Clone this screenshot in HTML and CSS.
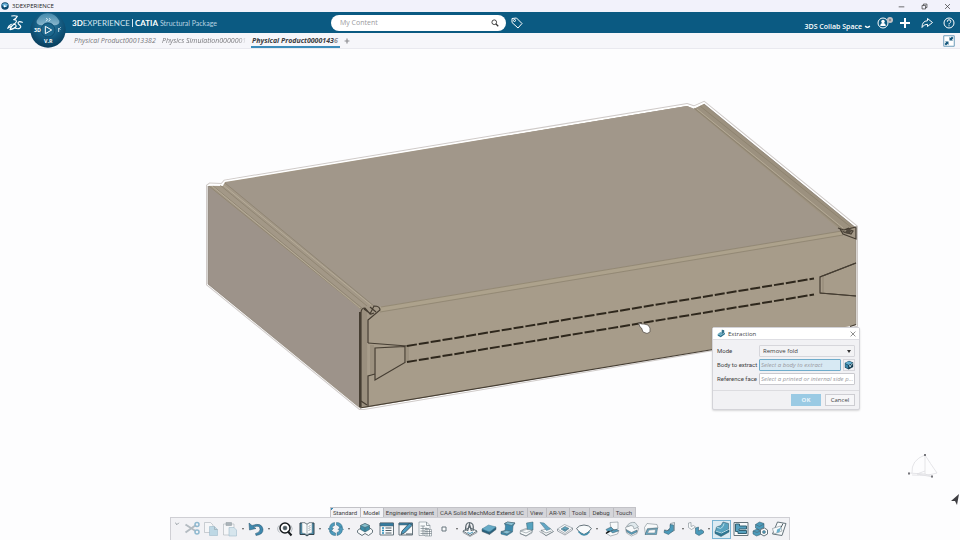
FILE: index.html
```html
<!DOCTYPE html>
<html lang="en">
<head>
	<meta charset="utf-8">
	<title>3DEXPERIENCE</title>
	<link rel="stylesheet" href="styles.css">
</head>
<body>

  <header class="titlebar">
    <svg class="app-icon" viewBox="0 0 16 16"><circle cx="8" cy="8" r="7.5" fill="#0c4a70"/><path d="M2 5q6-5 12 0l-3 5H5z" fill="#6fb5dc"/><path d="M6 6l5 2.500-5 2.500z" fill="#fff"/></svg>
    <span class="app-name">3DEXPERIENCE</span>
    <div class="window-buttons">
      <button aria-label="Minimize"><svg viewBox="0 0 10 10"><path d="M1 5.500h8"/></svg></button>
      <button aria-label="Restore"><svg viewBox="0 0 10 10"><path d="M1.500 3.500h5v5h-5zM3.500 3.500v-2h5v5h-2"/></svg></button>
      <button aria-label="Close window"><svg viewBox="0 0 10 10"><path d="M1.500 1.500l7 7M8.500 1.500l-7 7"/></svg></button>
    </div>
  </header>

  <div class="topbar">
    <svg class="ds-logo" viewBox="0 0 48 48"><path d="M14 3q10-2 17 1-3 7-11 10 9 0 8 6-3 8-26 20 2-7 11-12M46 22q-10-5-13 1 0 4 5 7 6 5 1 9-5 4-13 1M18 27q11 1 9 8-4 6-18 9 3-9 10-15" fill="none" stroke="#fff" stroke-width="3.400" stroke-linecap="round" stroke-linejoin="round"/></svg>
    <div class="brand"><b>3D</b><span>EXPERIENCE</span><i></i><b>CATIA</b><small>Structural Package</small></div>
    <form class="search">
      <input type="text" placeholder="My Content" aria-label="Search">
      <button type="button" aria-label="Start search"><svg viewBox="0 0 16 16"><circle cx="6.500" cy="6.500" r="4.700"/><path d="M10 10l4.500 4.500" stroke-width="2.600"/></svg></button>
    </form>
    <button class="tag" aria-label="Tags"><svg viewBox="0 0 24 24"><path d="M2 3l9-1 11 11-8 9L2 11z"/><circle cx="7" cy="7" r="2"/></svg></button>
    <div class="top-right">
      <button class="space">3DS Collab Space <svg viewBox="0 0 10 6"><path d="M1.500 1.500q3.500 4 7 0"/></svg></button>
      <button class="me" aria-label="Profile"><svg viewBox="0 0 32 24"><circle cx="12" cy="12" r="10"/><circle cx="12" cy="9" r="3.500" fill="#fff" stroke="none"/><path d="M6.500 18q0-6 5.500-6t5.500 6z" fill="#fff" stroke="none"/><circle cx="26" cy="6" r="6" fill="#c3c3c6" stroke="none"/><circle cx="26" cy="6" r="2.500" fill="#8c8c90" stroke="none"/></svg></button>
      <button aria-label="Add"><svg viewBox="0 0 24 24"><path d="M12 2v20M2 12h20" class="thick"/></svg></button>
      <button aria-label="Share"><svg viewBox="0 0 24 24"><path d="M13 3l10 8-10 8v-4.500Q6 14 2 21 2 8 13 7.500z"/></svg></button>
      <button aria-label="Help"><svg viewBox="0 0 24 24"><circle cx="12" cy="12" r="10"/><path d="M8.500 9.500q0-4 3.500-4t3.500 3.500q0 2-2 3-1.500 1-1.500 2.800M12 16.500v2.200"/></svg></button>
    </div>
  </div>

  <button class="compass" aria-label="Compass">
    <svg viewBox="0 0 108 108">
      <defs>
        <radialGradient id="ball" cx="50%" cy="35%" r="65%"><stop offset="0" stop-color="#3b87ac"/><stop offset=".6" stop-color="#12587e"/><stop offset="1" stop-color="#083c5b"/></radialGradient>
        <linearGradient id="north" x1="0" y1="0" x2="0" y2="1"><stop offset="0" stop-color="#4d93b5"/><stop offset="1" stop-color="#a2c8da"/></linearGradient>
      </defs>
      <circle cx="54" cy="54" r="53" fill="url(#ball)"/>
      <path d="M20 26Q32 3 54 4t34 22q3 12-17 14-7-9-17-9t-17 9Q17 38 20 26z" fill="url(#north)" opacity=".8"/>
      <circle cx="54" cy="54" r="21" fill="#1b668c" stroke="#0a4161" stroke-width="2"/>
      <path d="M46 43l19 11-19 11z" fill="none" stroke="#fff" stroke-width="3"/>
      <path d="M48 19l5 3-5 6M57 19l4 3-5 6M86 48v12M92 46l-4 4 3 3" fill="none" stroke="#e8f4fa" stroke-width="2.500"/>
      <text x="12" y="61">3D</text><text x="42" y="94">V.R</text>
    </svg>
  </button>

  <nav class="doc-tabs">
    <a href="#">Physical Product00013382</a>
    <a href="#" class="cut">Physics Simulation0000001</a>
    <a href="#" class="current">Physical Product0000143<span>6</span></a>
    <button class="add-tab" aria-label="New tab"><svg viewBox="0 0 10 10"><path d="M5 1v8M1 5h8"/></svg></button>
    <button class="shrink" aria-label="Exit full view"><svg viewBox="0 0 24 24"><path d="M1.500 1.500h21v21h-21z" fill="#fff" stroke="#6e9dbb" stroke-width="2"/><path d="M13 11V4l2 2 3-3 3 3-3 3 2 2zM11 13v7l-2-2-3 3-3-3 3-3-2-2z" fill="#15577d"/></svg></button>
  </nav>

  <main class="viewport">
    <svg class="scene" viewBox="0 49 960 458">
      <!-- pale halo, then the faces -->
      <path class="halo" d="M208 186l2-1.500 12 .5 3-3.500L687 105l7 2.500 10-4.500L856 227V325L364 408h-4L208 284z"/>
      <path class="halo-inner" d="M208 186l2-1.500 12 .5 3-3.500L687 105l7 2.500 10-4.500L856 227V325L364 408h-4L208 284z"/>
      <path d="M208 186l15 0 2-4L687 106l7 3 10-5L856 228V325L364 408h-4L208 284z" fill="#a39887"/>
      <path d="M225 183L687 106l7 3L842 232 380 308 372 305z" fill="#a1978a"/>
      <path d="M208 186L360 309v98L208 284z" fill="#9d938a"/>
      <path d="M368 320l12-10L843 234l13 5v86L367 407z" fill="#a79c8a"/>
      <path d="M694 109l10-5L856 228l-14 3z" fill="#9c917f"/>
      <path d="M379 307L842 231v4L379 312z" fill="#ada28c"/>
      <path d="M209 186L361 309M213 186L362 308M225 183L374 306M220 185L367 306" class="crease"/>
      <path d="M212 186L360 308M223 185L371 305M697 109L843 228" class="shine"/>
      <path d="M694 108L841 228M700 106L852 228M381 307L842 231M380 312L843 235" class="crease"/>
      <path d="M704 104L856 228V325M208 186V284L360 408" class="edge-soft"/>

      <!-- left corner and lock tab -->
      <path d="M361 309h6v96l-6 2z" fill="#9a8f7e"/>
      <path d="M361 407V313q0-5 4-5l5 6 4-8q6 0 6 4l-12 10v23M364 309l7 5 3-1M370 307l6 5M368 406v-30l7-2" class="edge"/>
      <path d="M360 407V312" class="edge-wide"/>
      <path d="M368 343l39 3M375 348l30-1.500v16L375 380z" class="edge"/>
      <path d="M371 345v29M373 345v29M406 346v16M408 346v16" class="crease"/>
      <path d="M361 401l6 4M360 408l5-1L713 349.500M850 326.500l6-2" class="edge"/>

      <path d="M407 346L814 278.500M407 362L814 294.500" class="perforation"/>

      <!-- right lock tab and corner -->
      <path d="M856 263l-36 14v16l36 3" class="edge"/>
      <path d="M820 293l36 3M820 277l36-14" class="edge"/>
      <path d="M823 276v17" class="crease"/>
      <path d="M838 228l6 2 12-3v12l-13-5-3-5M844 230l5-2M845 232l6 2 2-3-5-2-2 4" class="edge"/>
      <path d="M841 230l5 2 1-3 5 2-3 3-5-1z" fill="#50483d"/>

      <!-- axis triad -->
      <g class="triad"><path d="M925 455v19l-17-1M925 455q-14 5-13 18M925 474l8 3M925 455q5 8 12 18-9 3-25 2M925 471l-8 3 16 3"/><path d="M924 455h2M908 473.500h2M931 476.500h2" class="tips"/></g>
      <path d="M959 494l-8 7 4 0 2 4z" fill="#3e3e42"/>
      <!-- hand cursor -->
      <path d="M638.500 323l3.500 1 2 0 4 1 2 3v4l-3 1.500-4-1.500-1.500-4-1.500-1z" fill="#fff" stroke="#5c564f" stroke-width=".8"/>
    </svg>

    <form class="dialog">
      <div class="dialog-title">
        <svg viewBox="0 0 24 24"><path d="M2 13l8 4 11-8v5l-11 8-8-4z" fill="#2b7390"/><path d="M2 13l7-5 3 1 1-7 6 1v6L10 17z" fill="#68a9bf"/><path d="M13 2l6 1v6l-6 4z" fill="#35718a"/></svg>
        <h2>Extraction</h2>
        <button type="button" aria-label="Close"><svg viewBox="0 0 10 10"><path d="M1 1l8 8M9 1L1 9"/></svg></button>
      </div>
      <div class="dialog-body">
        <label for="mode">Mode</label>
        <div class="select-box"><select id="mode"><option>Remove fold</option></select></div>
        <label for="body">Body to extract</label>
        <div class="pick">
          <input id="body" class="active" type="text" placeholder="Select a body to extract">
          <button type="button" aria-label="Pick body"><svg viewBox="0 0 24 24"><path d="M2 7l10-5 10 4v11l-11 6-9-5z" fill="#153c50"/><path d="M2 7l10-4 9 4-10 5z" fill="#65b0d1"/><path d="M3 9l7 4v8l-7-4z" fill="#3a88ac"/><path d="M13 17l8-9M13 12l3 5" stroke="#d9edf5" stroke-width="2"/></svg></button>
        </div>
        <label for="face">Reference face</label>
        <input id="face" type="text" placeholder="Select a printed or internal side p...">
      </div>
      <div class="dialog-buttons">
        <button type="button" class="ok">OK</button>
        <button type="button">Cancel</button>
      </div>
    </form>
  </main>

  <footer class="action-bar">
    <nav class="sections">
      <a href="#" class="open pinned">Standard</a>
      <a href="#" class="open">Model</a>
      <a href="#">Engineering Intent</a>
      <a href="#">CAA Solid MechMod Extend UC</a>
      <a href="#">View</a>
      <a href="#">AR-VR</a>
      <a href="#">Tools</a>
      <a href="#">Debug</a>
      <a href="#">Touch</a>
    </nav>
    <div class="tools">
      <button class="collapse" aria-label="Collapse"><svg viewBox="0 0 10 6"><path d="M2 1l3 3 3-3"/></svg></button>
      <button class="off" aria-label="Cut"><svg viewBox="0 0 32 32"><path d="M3 7l20 13M3 23L24 8" stroke="#8a979f" stroke-width="4"/><circle cx="26" cy="7" r="4" stroke="#4e94b8" stroke-width="3"/><circle cx="26" cy="22" r="4" stroke="#4e94b8" stroke-width="3"/></svg></button>
      <button class="off" aria-label="Copy"><svg viewBox="0 0 32 32"><path d="M3 3h12l5 5v15H3z" class="paper"/><path d="M13 11h10l6 6v12H13z" fill="#9cc8dc" stroke="#568ba5"/><path d="M23 11v6h6"/></svg></button>
      <button class="off" aria-label="Paste"><svg viewBox="0 0 32 32"><path d="M3 6h21v22H3z" class="paper"/><path d="M8 3h11v6H8z" fill="#7b8a92"/><path d="M14 13h10l5 5v12H14z" fill="#c4dde8" stroke="#568ba5"/></svg></button><button class="more" aria-label="Paste options"></button>
      <button aria-label="Undo"><svg viewBox="0 0 32 32"><path d="M2 4l1 14 13-3-5-3q13-5 13 5 0 6-9 8l1 4q15-2 14-13Q27 2 8 9z" fill="#3e88ae" stroke="#28536a"/></svg></button><button class="more" aria-label="Undo history"></button>
      <button class="gap" aria-label="Fit all"><svg viewBox="0 0 32 32"><path d="M4 9Q-2 16 5 23M28 9q5 7 0 13" stroke="#b4bbc0" stroke-width="2"/><circle cx="16" cy="14" r="10" fill="#fff" stroke="#171b1e" stroke-width="3"/><circle cx="16" cy="14" r="4" fill="#4c5a62"/><path d="M22 21l7 8" stroke="#171b1e" stroke-width="4"/></svg></button>
      <button class="gap" aria-label="Catalog"><svg viewBox="0 0 32 32"><path d="M2 4h10l4 3 4-3h10v23H20l-4 3-4-3H2z" fill="#4d90ae" stroke="#33434c" stroke-width="2"/><path d="M6 3q7 0 10 4 3-4 10-4v21q-7 0-10 4-3-4-10-4z" class="paper"/><path d="M16 7v21M19 11l4-2M19 15l4-2M19 19l4-2"/></svg></button><button class="more" aria-label="Catalog options"></button>
      <button class="gap" aria-label="Update"><svg viewBox="0 0 32 32"><g fill="#4d9bbd" stroke="#2f667f"><path d="M3 15Q3 5 13 3v6q-5 1-5 6h3l-6 6-5-6z"/><path d="M17 3q10 0 12 10h-6q-1-4-6-5z"/><path d="M29 17q-1 10-11 12v-6q5-1 5-6h-3l6-6 5 6z"/><path d="M15 29Q5 29 3 20h6q1 3 6 4z"/></g></svg></button><button class="more" aria-label="Update options"></button>
      <button class="gap" aria-label="Assembly"><svg viewBox="0 0 32 32"><path d="M1 19l8-6 7 2 7-3 8 6v5l-8 6-7-4-6 4-9-6z" class="paper" stroke-width="2"/><path d="M7 9l9-4 9 4v8l-9 5-9-5z" fill="#3c8ba5" stroke="#24505f"/><path d="M7 9l9 4 9-4-9-4z" fill="#86c0cf"/><path d="M16 13v9"/></svg></button>
      <button class="gap" aria-label="Properties"><svg viewBox="0 0 32 32"><path d="M2 4h27v24H2z" class="paper" stroke-width="2"/><path d="M2 4h27v6H2z" fill="#347ba0"/><path d="M6 14h4M6 19h4M6 24h4" stroke="#278bb8" stroke-width="3"/><path d="M13 14h12M13 19h12M13 24h12" stroke-width="2"/></svg></button>
      <button aria-label="Edit sketch"><svg viewBox="0 0 32 32"><path d="M2 4h27v24H2z" class="paper" stroke-width="2"/><path d="M2 4h27v4H2z" fill="#347ba0"/><path d="M8 20L23 4l5 5-15 15-7 3z" fill="#4c9cc1" stroke="#2d3f49" stroke-width="1.500"/><path d="M16 26h12" stroke-width="2"/></svg></button>
      <button aria-label="Parameters table"><svg viewBox="0 0 32 32"><path d="M4 2h15l7 7v20H4z" class="paper"/><path d="M19 2v7h7M7 10h9M7 15h17M7 20h17M7 25h17M12 10v18M18 13v15" stroke="#7b878e" stroke-width="1.500"/><path d="M16 17h13v13H16z" class="paper"/><path d="M16 21h13M16 25h13M20 17v13M25 17v13"/></svg></button>
      <button aria-label="Point"><svg viewBox="0 0 32 32"><path d="M12 12h8v8h-8z" class="paper" stroke-width="2"/></svg></button><button class="more" aria-label="Point options"></button>
      <button aria-label="Sheet parameters"><svg viewBox="0 0 32 32"><path d="M2 20l13-7 15 7-14 9z" class="paper" stroke-width="2"/><path d="M2 20v3l14 8 14-8v-3"/><path d="M8 20Q5 4 15 3q10 0 7 17M11 20l4-13 4 13" stroke="#5a666d" stroke-width="2.500"/><path d="M11 23l5 2 6-3" stroke="#3c91b6" stroke-width="2"/></svg></button>
      <button aria-label="Wall"><svg viewBox="0 0 32 32"><path d="M2 16v5l15 6 13-10v-5z" fill="#27617e"/><path d="M2 16L15 8l15 4-13 10z" fill="#66abc7" stroke="#457e97"/><path d="M17 21v6"/></svg></button>
      <button aria-label="Extrusion"><svg viewBox="0 0 32 32"><path d="M9 5l6-3 15 2-4 6-1 12-11 7-12-3v-5l8-2 1-9z" fill="#3c8aad" stroke="#2c5b70"/><path d="M9 5l6-3 15 2-7 5zM3 22l10-3 10 2-9 5z" fill="#86c1d6"/></svg></button>
      <button aria-label="Wall on edge"><svg viewBox="0 0 32 32"><path d="M3 19l11-4 12 3v6l-12 6L2 25z" class="paper"/><path d="M15 4l13-2v16l-11 2z" fill="#55a2bf" stroke="#335a6b"/><path d="M3 20l12-3 12 1-13 6z" class="paper"/><path d="M2 25l12 5 13-9"/></svg></button>
      <button aria-label="Flange"><svg viewBox="0 0 32 32"><path d="M6 19l18-5 7 7-15 9z" class="paper"/><path d="M4 3l8 1 13 12-8 3z" fill="#62a6c4" stroke="#467386"/><path d="M3 21l13 8 15-8M6 18l10 6 11-4"/></svg></button>
      <button aria-label="Cutout"><svg viewBox="0 0 32 32"><path d="M1 16L15 7l16 7-15 11z" class="paper"/><path d="M8 16l8-5 8 4-8 6z" fill="#63a6c0" stroke="#3e606f"/><path d="M1 16v4l15 8 15-10v-4M12 16l5 2 4-3"/></svg></button>
      <button aria-label="Corner"><svg viewBox="0 0 32 32"><path d="M1 15Q6 8 16 8t15 7q-6 9-15 12Q6 24 1 15z" class="paper" stroke-width="2"/><path d="M5 21q5 6 11 7 7-1 11-7" stroke="#438da9" stroke-width="3"/></svg></button><button class="more" aria-label="Corner options"></button>
      <button class="gap" aria-label="Join"><svg viewBox="0 0 32 32"><path d="M10 3l16-1v14l-13 3zM5 19l8-3 15 3-3 7-14 4-8-5z" class="paper"/><path d="M2 17l10-5 5 5-10 6zM11 20l13-3 3 3-12 4z" fill="#55a0bf" stroke="#335361"/><path d="M9 20l-7 5" stroke="#111" stroke-width="3"/></svg></button>
      <button aria-label="Fold"><svg viewBox="0 0 32 32"><path d="M3 13l13-5 13 7-3 10-11 5L5 24z" class="paper"/><path d="M5 11q6-10 17-8l7 9-9 4q0-7-6-7z" fill="#dfe8ec" stroke="#6b7880"/><path d="M4 17l11 6 11-5v4l-11 5-9-5z" fill="#55a0bf"/></svg></button>
      <button aria-label="Unfold"><svg viewBox="0 0 32 32"><path d="M3 13l5-8 20 2 2 7-21 1-4 12z" class="paper"/><path d="M4 27l5-11 20-2-2 13z" fill="#6aabc5" stroke="#3e5f6d"/><path d="M9 24l3-6 13-1-1 7z" class="paper"/></svg></button>
      <button aria-label="Bend"><svg viewBox="0 0 32 32"><path d="M17 5l8-2v16l-8 4z" fill="#e2eaee" stroke="#4e6069"/><path d="M5 18l5 2 6-6v-7l7 1v11L13 27l-9-4z" fill="#4b9aba" stroke="#2b5264"/><path d="M5 18l7 1 4-2"/></svg></button><button class="more" aria-label="Bend options"></button>
      <button aria-label="Convert bends"><svg viewBox="0 0 32 32"><path d="M1 4l5-1v8l5-2 4 3-8 5-6-4z" class="paper"/><path d="M15 14l6-2v8l5-3 5 3v4l-9 5-7-4z" fill="#4b9aba" stroke="#2b5264"/></svg></button><button class="more" aria-label="Convert options"></button>
      <button class="on" aria-label="Extraction"><svg viewBox="0 0 32 32"><path d="M2 20l11-6 17 4v4l-16 9-12-6z" fill="#2f7895" stroke="#2c5060"/><path d="M5 12l9-3 4-7 11 3v11l-14 8-12-4z" fill="#58a3c0" stroke="#2c5060"/><path d="M5 12l8 3 5-4 2-6M3 20l12 4 14-7" stroke="#b4dae7" stroke-width="2"/></svg></button>
      <button aria-label="Flat pattern"><svg viewBox="0 0 32 32"><path d="M2 3h28v26H2z" class="paper" stroke-width="2"/><path d="M5 6h8v4h14v6H12v3h15v6H10v-4H5z" fill="#55a0bf" stroke="#336073" stroke-width="2"/></svg></button>
      <button aria-label="Check overlap"><svg viewBox="0 0 32 32"><path d="M7 7l8-5 9 3v8l-9 5-8-4zM2 20l8-4 7 4v7l-8 3-7-4z" fill="#4b9aba" stroke="#2b5264"/><path d="M7 7l8 4 9-5M2 20l8 3 7-3"/><path d="M17 17l8-3 6 4v8l-7 4-7-4z" class="paper" stroke-width="2"/><circle cx="24" cy="22" r="3" fill="#4b9aba"/></svg></button>
      <button aria-label="Save as sheet"><svg viewBox="0 0 32 32"><path d="M13 2l17 3-8 24-19-3z" class="paper" stroke-width="2"/><path d="M3 15l16-5 3 10-16 6z" class="paper"/><path d="M12 17l8-4-3 9-6 2z" fill="#6db2cd" stroke="none"/><path d="M24 5l-4 8" stroke-width="2"/></svg></button>
    </div>
  </footer>

</body>
</html>
```
FILE: styles.css
```css
* {
  box-sizing: border-box;
}

body {
  margin: 0;
  min-height: 100vh;
  display: flex;
  flex-direction: column;
  position: relative;
  background: #fdfdfe;
  font-family: "Open Sans", "Noto Sans", sans-serif;
  font-size: 6px;
  line-height: 8px;
  color: #3d3d42;
  overflow: hidden;
}

button {
  display: flex;
  align-items: center;
  justify-content: center;
  padding: 0;
  border: 0;
  background: none;
  color: inherit;
  font: inherit;
}

a {
  color: inherit;
  text-decoration: none;
}

svg {
  display: block;
  fill: none;
}

/* window title */
.titlebar {
  display: flex;
  align-items: center;
  height: 12px;
  padding: 0 1px;
  background: #f2f2fb;
  color: #222;
}

.app-icon {
  width: 8px;
  height: 8px;
  margin-right: 3px;
}

.window-buttons {
  display: flex;
  margin-left: auto;
}

.window-buttons button {
  width: 23px;
}

.window-buttons svg {
  width: 7px;
  height: 7px;
  stroke: #333;
}

/* blue bar */
.topbar {
  display: flex;
  align-items: center;
  height: 21px;
  padding: 0 5px 0 7px;
  background: #0b5a82;
  color: #fff;
}

.ds-logo {
  width: 16px;
  height: 16px;
  margin-right: 49px;
}

.brand {
  display: flex;
  align-items: center;
  width: 259px;
  font-size: 8px;
  font-family: Lato, sans-serif;
}

.brand span {
  color: #d4e4ee;
}

.brand i {
  width: 1px;
  height: 8px;
  margin: 0 2px;
  background: #d4e4ee;
}

.brand small {
  margin-left: 2px;
  font-size: 7px;
  color: #b9d3e1;
}

.search {
  display: flex;
  align-items: center;
  flex: 0 0 175px;
  height: 16px;
  padding: 0 7px 0 9px;
  border-radius: 8px;
  background: #fff;
}

.search input {
  flex: 1;
  min-width: 0;
  padding: 0;
  border: 0;
  outline: 0;
  background: none;
  font: 7px "Open Sans", sans-serif;
}

.search input::placeholder {
  color: #9a9a9e;
}

.search svg {
  width: 8px;
  height: 8px;
  stroke: #333;
  stroke-width: 1.8px;
}

.tag {
  margin-left: 5px;
}

.tag svg {
  width: 12px;
  height: 12px;
  stroke: #fff;
  stroke-width: 2px;
}

.top-right {
  display: flex;
  align-items: center;
  gap: 10px;
  margin-left: auto;
}

.top-right svg {
  width: 12px;
  height: 12px;
  stroke: #fff;
  stroke-width: 2px;
}

.top-right .thick {
  stroke-width: 4px;
}

.top-right .space {
  margin: 8px -4px 0 0;
  font-size: 7px;
  font-weight: 600;
}

.top-right .space svg {
  width: 7px;
  height: 4px;
  margin-left: 2px;
}

.top-right .me svg {
  width: 16px;
}

.top-right .me {
  margin-right: -4px;
}

.compass {
  position: absolute;
  top: 12px;
  left: 30px;
  width: 36px;
  height: 36px;
  z-index: 2;
}

.compass text {
  fill: #fff;
  font: bold 16px "Open Sans", sans-serif;
}

/* document tabs */
.doc-tabs {
  display: flex;
  height: 16px;
  padding: 0 5px 0 71px;
  border-bottom: 1px solid #e9e9ef;
  background: #f6f6fa;
  color: #77777b;
  font-size: 7px;
  font-style: italic;
  line-height: 15px;
}

.doc-tabs a {
  width: 88px;
  padding-left: 3px;
  white-space: nowrap;
}

.doc-tabs .cut {
  margin-right: 4px;
  -webkit-mask-image: linear-gradient(to right, #000 90%, transparent);
  mask-image: linear-gradient(to right, #000 90%, transparent);
}

.doc-tabs .current {
  width: 89px;
  padding-left: 1px;
  border-bottom: 2px solid #3c8cbb;
  color: #3b3b40;
  font-weight: bold;
}

.doc-tabs .current span {
  color: #909095;
}

.add-tab {
  margin-left: 4px;
}

.add-tab svg {
  width: 6px;
  height: 6px;
  stroke: #8c8c90;
  stroke-width: 2px;
}

.shrink {
  margin-left: auto;
}

.shrink svg {
  width: 12px;
  height: 12px;
}

/* 3D view */
.viewport {
  flex: 1;
  position: relative;
}

.scene {
  width: 100%;
}

.halo {
  stroke: #cfcac8;
  stroke-width: 4px;
}

.halo-inner {
  stroke: #fff;
  stroke-width: 2px;
}

.crease {
  stroke: #857a66;
  stroke-width: .6px;
}

.shine {
  stroke: #bfb49f;
  stroke-width: .7px;
}

.edge {
  stroke: #453d32;
  stroke-width: 1.2px;
}

.edge-wide {
  stroke: #453d32;
  stroke-width: 2px;
}

.edge-soft {
  stroke: #8f867d;
  stroke-width: .7px;
}

.perforation {
  stroke: #2e271c;
  stroke-width: 2px;
  stroke-dasharray: 10 2;
}

.triad {
  stroke: #dedee2;
  stroke-width: .8px;
}

.triad .tips {
  stroke: #77777c;
  stroke-width: 2px;
}

/* extraction dialog */
.dialog {
  position: absolute;
  top: 278px;
  right: 100px;
  width: 148px;
  border: 1px solid #d3d3d8;
  border-radius: 2px;
  background: #f1f1f4;
  box-shadow: 0 1px 2px rgba(0, 0, 0, 0.15);
}

.dialog-title {
  display: flex;
  align-items: center;
  gap: 2px;
  height: 12px;
  padding: 0 3px 0 4px;
  border-bottom: 1px solid #dedee3;
  background: #fff;
}

.dialog-title svg {
  width: 9px;
  height: 9px;
}

.dialog-title h2 {
  flex: 1;
  margin: 0;
  font-size: 6px;
  font-weight: normal;
}

.dialog-title button svg {
  width: 6px;
  height: 6px;
  stroke: #444;
}

.dialog-body {
  display: grid;
  grid-template-columns: 40px 1fr;
  gap: 2px;
  align-items: center;
  padding: 5px 4px;
}

.dialog-body label {
  font-family: Roboto, sans-serif;
  white-space: nowrap;
}

.dialog-body input,
.dialog-body select {
  width: 100%;
  height: 12px;
  padding: 0 1px;
  border: 1px solid #c9c9ce;
  border-radius: 1px;
  background: #fff;
  color: #3d3d42;
  font: 6px "Open Sans", sans-serif;
}

.dialog-body select {
  appearance: none;
  display: block;
  padding: 0 3px;
  border-color: #d6d6db;
  background: #f3f3f5;
}

.select-box {
  position: relative;
}

.select-box::after {
  content: "";
  position: absolute;
  top: 5px;
  right: 4px;
  border: 2px solid transparent;
  border-top: 3px solid #333;
  border-bottom: 0;
}

.dialog-body input::placeholder {
  color: #97979c;
  font-style: italic;
}

.dialog-body input.active {
  border-color: #6faccb;
  background: #d7e9f3;
}

.pick {
  display: flex;
  gap: 2px;
}

.pick button {
  flex: 0 0 12px;
  border: 1px solid #d6d6db;
}

.pick svg {
  width: 10px;
  height: 10px;
}

.dialog-buttons {
  display: flex;
  justify-content: flex-end;
  gap: 4px;
  padding: 3px 4px;
  border-top: 1px solid #dcdce0;
}

.dialog-buttons button {
  width: 30px;
  height: 12px;
  border: 1px solid #cdcdd2;
  background: #f6f6f8;
}

.dialog-buttons .ok {
  border-color: #9acae4;
  background: #9acae4;
  color: #e9f5fb;
  font-weight: bold;
}

/* bottom action bar */
.action-bar {
  align-self: center;
  width: 620px;
}

.sections {
  display: flex;
  width: max-content;
  margin-left: 160px;
  border: 1px solid #c2c2c7;
  border-bottom: 0;
  background: #d5d5d9;
  font-family: Roboto, sans-serif;
}

.sections a {
  padding: 0 3px 0 2px;
  line-height: 9px;
  border-right: 1px solid #bcbcc1;
}

.sections a:last-child {
  border-right: 0;
}

.sections .open {
  background: #f3f3f6;
}

.sections .pinned {
  background: linear-gradient(135deg, #3789b5 2px, #f3f3f6 2px);
}

.tools {
  display: flex;
  align-items: center;
  height: 23px;
  border: 1px solid #cfcfd4;
  border-bottom: 0;
  background: #f2f2f5;
}

.tools button {
  flex: 0 0 19px;
  height: 19px;
}

.tools svg {
  width: 16px;
  height: 16px;
  stroke: #4f5d65;
}

.tools .paper {
  fill: #f8fafb;
  stroke: #66747c;
}

.tools .off {
  opacity: 0.6;
}

.tools .gap {
  margin-left: 3px;
}

.tools .more {
  flex: 0 0 7px;
}

.more::after {
  content: "";
  border: 1px solid transparent;
  border-top: 2px solid #555;
  border-bottom: 0;
}

.tools .on {
  border: 1px solid #79b4d3;
  background: #dcebf3;
}

.tools .collapse {
  flex: 0 0 11px;
  align-items: flex-start;
  padding-top: 2px;
}

.tools .collapse svg {
  width: 6px;
  height: 4px;
}
```
